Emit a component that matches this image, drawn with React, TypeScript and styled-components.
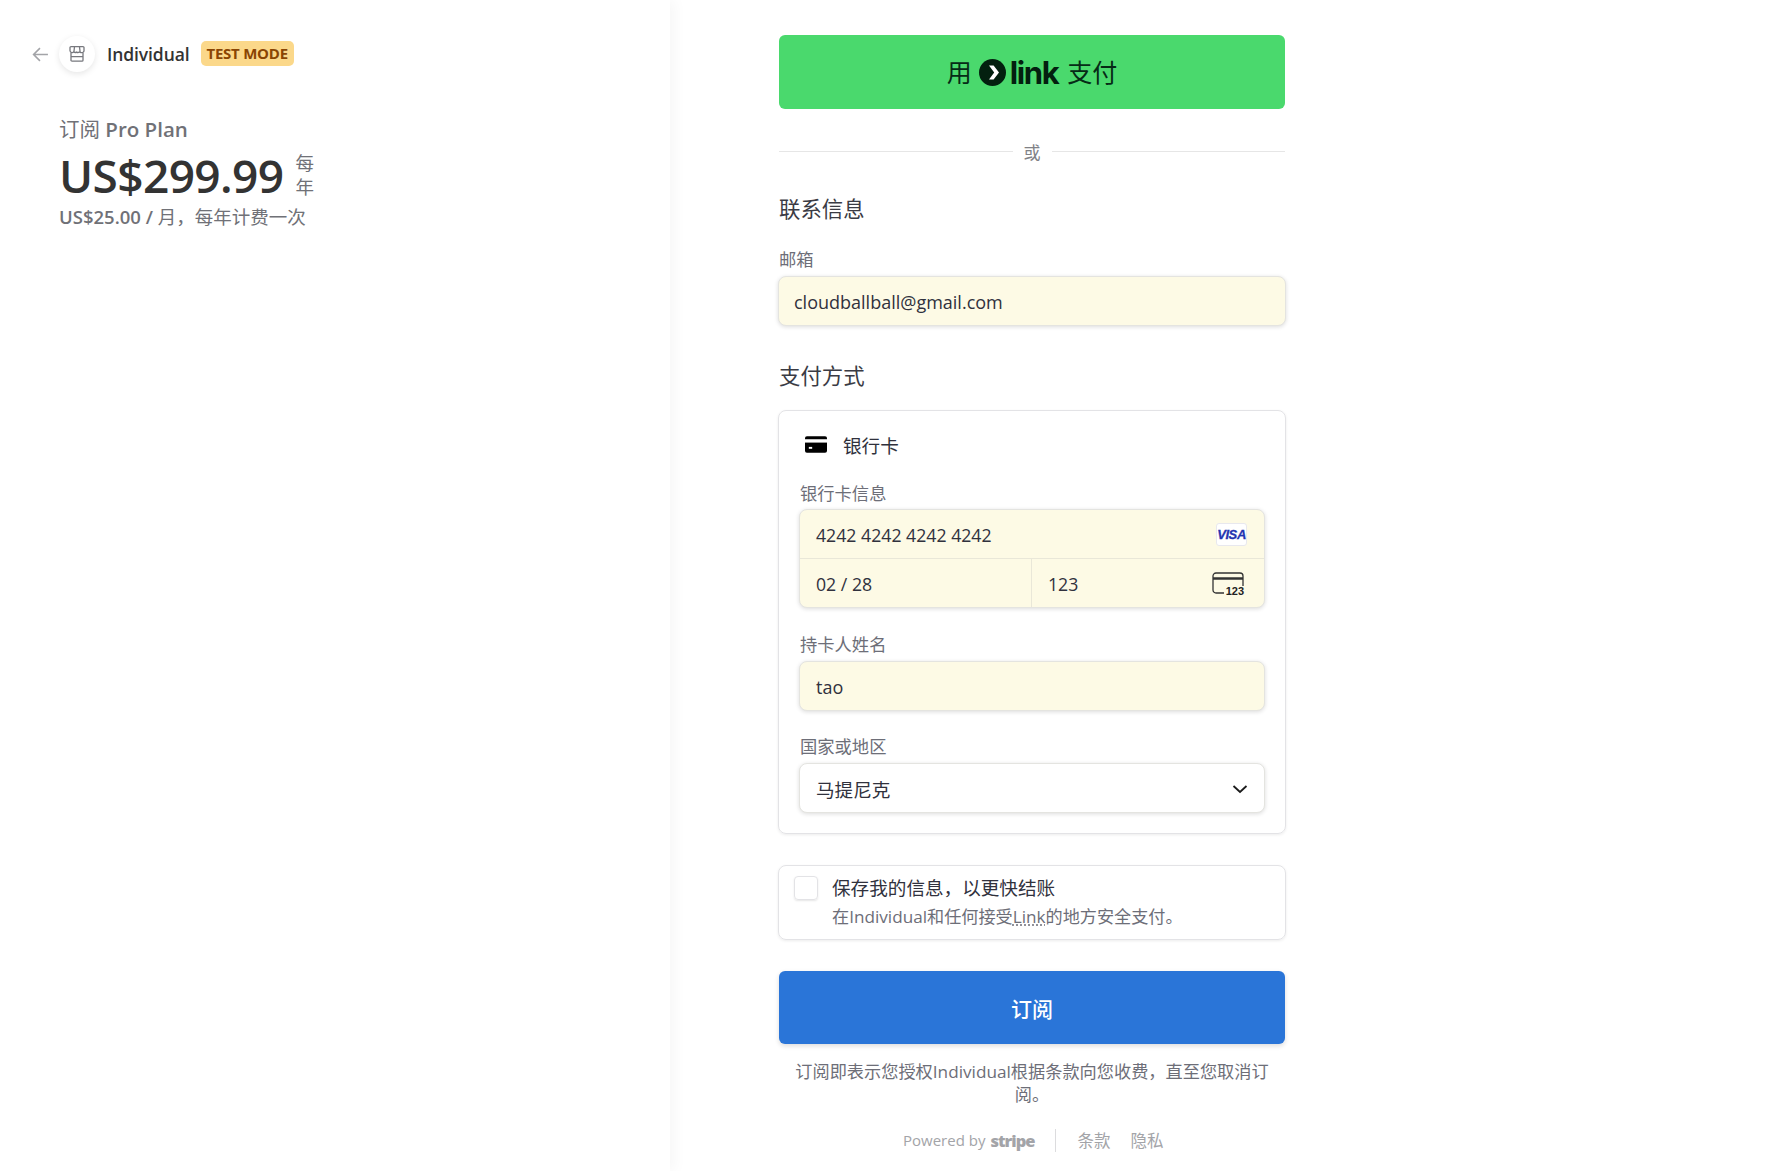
import React from "react";
import styled, { createGlobalStyle } from "styled-components";

const GlobalStyle = createGlobalStyle`
  * {
    box-sizing: border-box;
  }
  html,
  body {
    margin: 0;
    height: 100%;
    background: #fff;
  }
  body {
    font-family: "Open Sans", "Noto Sans CJK SC", sans-serif;
    color: #30313d;
    overflow: hidden;
  }
`;

const Page = styled.div`
  display: grid;
  grid-template-columns: 670px 1fr;
  height: 1171px;
`;

const Summary = styled.aside`
  padding: 36px 0 0 32px;
  box-shadow: 4px 0 14px rgba(0, 0, 0, 0.04);
`;

const Brand = styled.div`
  display: flex;
  align-items: center;
  height: 36px;
`;

const BackArrow = styled.svg`
  width: 17px;
  height: 17px;
  margin-right: 10px;
  color: #a3a4a8;
`;

const StoreBadge = styled.span`
  display: flex;
  align-items: center;
  justify-content: center;
  width: 36px;
  height: 36px;
  border-radius: 50%;
  background: #fff;
  box-shadow: 0 2px 6px rgba(0, 0, 0, 0.1);
  color: #77787e;
`;

const BrandName = styled.span`
  margin-left: 12px;
  font-size: 17.5px;
  font-weight: 600;
  letter-spacing: -0.1px;
  color: #333;
`;

const TestBadge = styled.span`
  margin: 0 0 2px 11px;
  padding: 0 6px;
  height: 25px;
  line-height: 25px;
  border-radius: 5px;
  background: #fbd88a;
  color: #8a4503;
  font-size: 15px;
  font-weight: 700;
  letter-spacing: -0.25px;
  white-space: nowrap;
`;

const Plan = styled.div`
  margin: 43px 0 0 27px;
`;

const PlanName = styled.div`
  font-size: 20.5px;
  line-height: 28px;
  color: #707177;
  b {
    font-weight: 600;
  }
`;

const PriceRow = styled.div`
  display: flex;
  align-items: center;
  margin-top: 3px;
  height: 58px;
`;

const Price = styled.div`
  font-size: 46px;
  font-weight: 600;
  letter-spacing: -0.6px;
  line-height: 58px;
  color: #333;
`;

const Period = styled.div`
  width: 20px;
  margin-left: 12px;
  font-size: 18.5px;
  line-height: 24px;
  font-weight: 400;
  color: #707177;
`;

const PerMonth = styled.div`
  margin-top: 1px;
  font-size: 18.5px;
  line-height: 24px;
  color: #707177;
  b {
    font-weight: 600;
  }
`;

const Main = styled.main`
  padding: 35px 0 0 108px;
`;

const Form = styled.form`
  width: 508px;
`;

const LinkButton = styled.div`
  display: flex;
  align-items: center;
  justify-content: center;
  height: 74px;
  margin: 0 1px;
  padding-bottom: 2px;
  border-radius: 6px;
  background: #4ad96d;
  color: #062b16;
  font-size: 25px;
`;

const LinkMark = styled.svg`
  width: 27px;
  height: 27px;
  margin: 2px 4px 0 7px;
`;

const LinkWord = styled.span`
  margin: 2px 9px 0 0;
  font-family: Inter, sans-serif;
  font-size: 31px;
  font-weight: 700;
  letter-spacing: -1.4px;
  line-height: 1;
  color: #03200f;
`;

const Divider = styled.div`
  display: flex;
  align-items: center;
  gap: 11px;
  height: 24px;
  margin: 30px 1px 0;
  font-size: 17px;
  color: #808186;
  &::before,
  &::after {
    content: "";
    flex: 1;
    height: 1px;
    background: #e6e6e6;
  }
`;

const Heading = styled.h2<{ $top: number }>`
  margin: ${(props) => props.$top}px 0 0;
  padding-left: 1px;
  font-size: 21.4px;
  font-weight: 400;
  line-height: 28px;
  color: #3a3b44;
`;

const Label = styled.div<{ $top: number }>`
  margin-top: ${(props) => props.$top}px;
  padding-left: 1px;
  font-size: 17.3px;
  line-height: 22px;
  color: #6d6e78;
`;

const Field = styled.div<{ $fill?: boolean; $inset: number }>`
  display: flex;
  align-items: center;
  justify-content: space-between;
  height: 50px;
  margin-top: 5px;
  padding: 1px ${(props) => props.$inset}px 0;
  border-radius: 8px;
  border: 1px solid #e4e4e0;
  background: ${(props) => (props.$fill ? "#fdfae5" : "#fff")};
  box-shadow: 0 1px 4px rgba(0, 0, 0, 0.14);
  font-size: 18px;
  color: #30313d;
`;

const SelectValue = styled.span`
  font-size: 18.6px;
`;

const Panel = styled.section`
  margin-top: 20px;
  height: 424px;
  padding: 19px 20px 20px;
  border: 1px solid #e3e3e6;
  border-radius: 8px;
  box-shadow: 0 1px 3px rgba(0, 0, 0, 0.08);
`;

const MethodRow = styled.div`
  display: flex;
  align-items: center;
  height: 28px;
  padding-left: 6px;
  font-size: 18.6px;
  color: #30313d;
`;

const CardGlyph = styled.svg`
  width: 22px;
  height: 17px;
  margin-right: 16px;
`;

const CardBox = styled.div`
  margin-top: 4px;
  height: 99px;
  border: 1px solid #e4e4e0;
  border-radius: 8px;
  background: #fdfae5;
  box-shadow: 0 1px 4px rgba(0, 0, 0, 0.14);
  font-size: 17.7px;
  overflow: hidden;
`;

const CardNumberRow = styled.div`
  display: flex;
  align-items: center;
  justify-content: space-between;
  height: 49px;
  padding: 1px 17px 0 16px;
  border-bottom: 1px solid #e9e7d8;
`;

const CardSplit = styled.div`
  display: grid;
  grid-template-columns: 231px 1fr;
  height: 48px;
`;

const CardCell = styled.div`
  display: flex;
  align-items: center;
  justify-content: space-between;
  padding: 1px 20px 0 16px;
  & + & {
    border-left: 1px solid #e9e7d8;
    padding-left: 16px;
  }
`;

const VisaTag = styled.span`
  display: flex;
  align-items: center;
  justify-content: center;
  width: 31px;
  height: 23px;
  border: 1px solid #e8e8ee;
  border-radius: 3px;
  background: #fff;
  font-family: "Liberation Sans", sans-serif;
  font-size: 13px;
  font-style: italic;
  font-weight: 700;
  letter-spacing: -0.4px;
  color: #2434b0;
  -webkit-text-stroke: 0.3px #2434b0;
`;

const CvcIcon = styled.span`
  position: relative;
  display: block;
  width: 32px;
  height: 23px;
`;

const CvcDigits = styled.span`
  position: absolute;
  right: 0;
  bottom: -2px;
  padding-left: 2px;
  background: #fdfae5;
  font-family: "Liberation Sans", sans-serif;
  font-size: 11px;
  font-weight: 700;
  line-height: 11px;
  color: #222;
`;

const SaveBox = styled.section`
  display: flex;
  height: 75px;
  margin-top: 31px;
  padding: 10px 0 0 15px;
  border: 1px solid #e3e3e6;
  border-radius: 8px;
  box-shadow: 0 1px 3px rgba(0, 0, 0, 0.08);
`;

const Checkbox = styled.span`
  flex: none;
  width: 24px;
  height: 24px;
  border: 1px solid #e3e3e6;
  border-radius: 4px;
  box-shadow: 0 1px 2px rgba(0, 0, 0, 0.1);
`;

const SaveText = styled.div`
  margin: -1px 0 0 14px;
`;

const SaveTitle = styled.div`
  font-size: 18.6px;
  line-height: 25px;
  color: #30313d;
`;

const SaveHint = styled.div`
  margin-top: 6px;
  font-size: 17.15px;
  line-height: 22px;
  color: #6d6e78;
  u {
    text-decoration: underline dotted;
    text-underline-offset: 2px;
  }
`;

const SubmitButton = styled.div`
  display: flex;
  align-items: center;
  justify-content: center;
  height: 73px;
  margin: 31px 1px 0;
  border-radius: 6px;
  background: #2a75d8;
  box-shadow: 0 2px 5px rgba(0, 0, 0, 0.14);
  color: #fff;
  font-size: 21px;
  font-weight: 500;
`;

const Terms = styled.p`
  margin: 16px 0 0;
  padding: 0 14px;
  font-size: 17.2px;
  line-height: 23px;
  text-align: center;
  color: #6d6e78;
`;

const Footer = styled.footer`
  display: flex;
  align-items: center;
  height: 30px;
  margin-top: 19px;
  padding-left: 125px;
  font-size: 15px;
  color: #a3a4a8;
`;

const StripeWord = styled.span`
  margin-left: 5px;
  font-size: 16.5px;
  font-weight: 800;
  letter-spacing: -1px;
  color: #a3a4a8;
`;

const FooterRule = styled.span`
  width: 1px;
  height: 23px;
  margin: 0 21px 0 21px;
  background: #dcdcde;
`;

const FooterLink = styled.span`
  margin-right: 20px;
  font-size: 16.5px;
`;

function App() {
  return (
    <Page>
      <GlobalStyle />
      <Summary>
        <Brand>
          <BackArrow viewBox="0 0 16 16" fill="none" stroke="currentColor" strokeWidth="1.5">
            <path d="M15 8H1.5M7.5 2 1.5 8l6 6" />
          </BackArrow>
          <StoreBadge>
            <svg width="18" height="18" viewBox="0 0 18 18" fill="none" stroke="currentColor" strokeWidth="1.3">
              <path d="M3 1.6h12a1 1 0 0 1 1 1v3.2a2 2 0 0 1-2.6 1.8 2.4 2.4 0 0 1-2-.6 2.6 2.6 0 0 1-2.8.1 2.6 2.6 0 0 1-2.8-.1 2.4 2.4 0 0 1-2 .6A2 2 0 0 1 2 5.8V2.6a1 1 0 0 1 1-1Z" />
              <path d="M6.5 1.8 5.9 7M11.5 1.8 12.1 7" />
              <path d="M3 8v7.2a1 1 0 0 0 1 1h10a1 1 0 0 0 1-1V8M3 11.6h12" />
            </svg>
          </StoreBadge>
          <BrandName>Individual</BrandName>
          <TestBadge>TEST MODE</TestBadge>
        </Brand>
        <Plan>
          <PlanName>订阅 <b>Pro Plan</b></PlanName>
          <PriceRow>
            <Price>US$299.99</Price>
            <Period>每年</Period>
          </PriceRow>
          <PerMonth><b>US$25.00 /</b> 月，每年计费一次</PerMonth>
        </Plan>
      </Summary>
      <Main>
        <Form>
          <LinkButton>
            用
            <LinkMark viewBox="0 0 27 27">
              <circle cx="13.5" cy="13.5" r="13.5" fill="#03200f" />
              <path d="M10 6.5h4.6l5.4 7-5.4 7H10l5.2-7Z" fill="#fff" />
            </LinkMark>
            <LinkWord>link</LinkWord>
            支付
          </LinkButton>
          <Divider>或</Divider>

          <Heading $top={32}>联系信息</Heading>
          <Label $top={26}>邮箱</Label>
          <Field $fill $inset={15}>cloudballball@gmail.com</Field>

          <Heading $top={36}>支付方式</Heading>
          <Panel>
            <MethodRow>
              <CardGlyph viewBox="0 0 23 17">
                <rect width="23" height="17" rx="2" fill="#000" />
                <rect y="3" width="23" height="3.5" fill="#fff" />
                <rect x="4" y="11" width="3.5" height="2" fill="#fff" />
              </CardGlyph>
              银行卡
            </MethodRow>
            <Label $top={25}>银行卡信息</Label>
            <CardBox>
              <CardNumberRow>
                4242 4242 4242 4242
                <VisaTag>VISA</VisaTag>
              </CardNumberRow>
              <CardSplit>
                <CardCell>02 / 28</CardCell>
                <CardCell>
                  123
                  <CvcIcon>
                    <svg width="32" height="23" viewBox="0 0 32 23" fill="none" stroke="#333" strokeWidth="1.3">
                      <rect x="1" y="1" width="30" height="20" rx="3" />
                      <path d="M1 6.5h30" strokeWidth="2.6" />
                    </svg>
                    <CvcDigits>123</CvcDigits>
                  </CvcIcon>
                </CardCell>
              </CardSplit>
            </CardBox>

            <Label $top={26}>持卡人姓名</Label>
            <Field $fill $inset={16}>tao</Field>

            <Label $top={25}>国家或地区</Label>
            <Field $inset={16}>
              <SelectValue>马提尼克</SelectValue>
              <svg width="16" height="16" viewBox="0 0 16 16" fill="none" stroke="#1a1a1a" strokeWidth="1.8">
                <path d="M1.5 5 8 11l6.5-6" />
              </svg>
            </Field>
          </Panel>

          <SaveBox>
            <Checkbox />
            <SaveText>
              <SaveTitle>保存我的信息，以更快结账</SaveTitle>
              <SaveHint>在Individual和任何接受<u>Link</u>的地方安全支付。</SaveHint>
            </SaveText>
          </SaveBox>

          <SubmitButton>订阅</SubmitButton>
          <Terms>订阅即表示您授权Individual根据条款向您收费，直至您取消订阅。</Terms>

          <Footer>
            Powered by
            <StripeWord>stripe</StripeWord>
            <FooterRule />
            <FooterLink>条款</FooterLink>
            <FooterLink>隐私</FooterLink>
          </Footer>
        </Form>
      </Main>
    </Page>
  );
}

export default App;
